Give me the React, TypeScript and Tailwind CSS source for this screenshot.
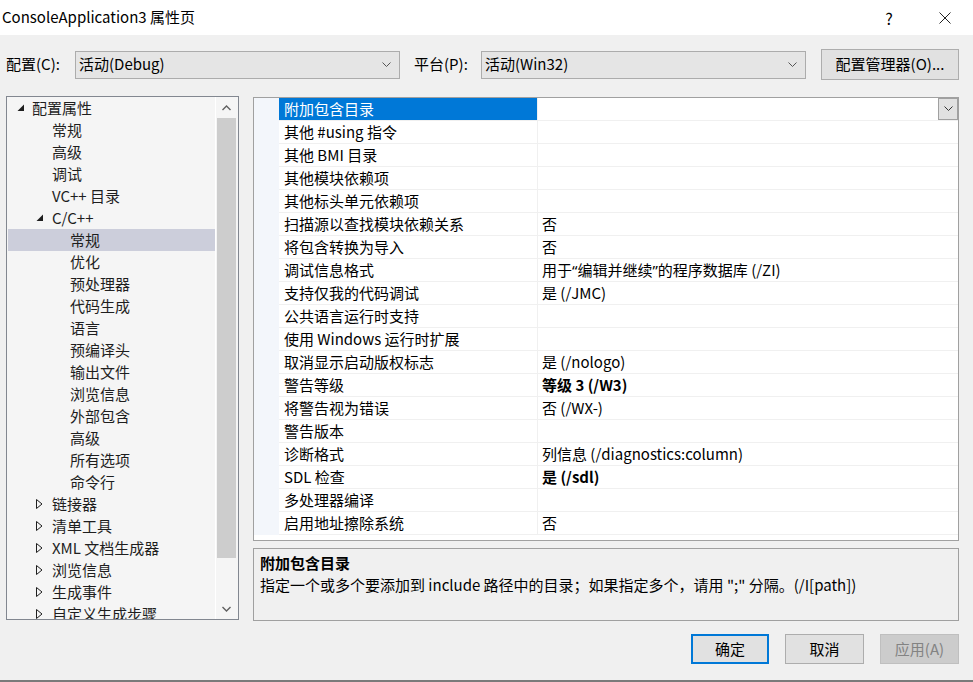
import React from "react";

type TreeItem = {
  label: string;
  level: 0 | 1 | 2;
  arrow?: "open" | "closed";
  selected?: boolean;
};

const TREE: TreeItem[] = [
  { label: "配置属性", level: 0, arrow: "open" },
  { label: "常规", level: 1 },
  { label: "高级", level: 1 },
  { label: "调试", level: 1 },
  { label: "VC++ 目录", level: 1 },
  { label: "C/C++", level: 1, arrow: "open" },
  { label: "常规", level: 2, selected: true },
  { label: "优化", level: 2 },
  { label: "预处理器", level: 2 },
  { label: "代码生成", level: 2 },
  { label: "语言", level: 2 },
  { label: "预编译头", level: 2 },
  { label: "输出文件", level: 2 },
  { label: "浏览信息", level: 2 },
  { label: "外部包含", level: 2 },
  { label: "高级", level: 2 },
  { label: "所有选项", level: 2 },
  { label: "命令行", level: 2 },
  { label: "链接器", level: 1, arrow: "closed" },
  { label: "清单工具", level: 1, arrow: "closed" },
  { label: "XML 文档生成器", level: 1, arrow: "closed" },
  { label: "浏览信息", level: 1, arrow: "closed" },
  { label: "生成事件", level: 1, arrow: "closed" },
  { label: "自定义生成步骤", level: 1, arrow: "closed" },
];

const INDENT = ["pl-[9px]", "pl-[28px]", "pl-[46px]"];

type Prop = { name: string; value?: React.ReactNode; bold?: boolean };

// curly quotes are narrow in the original font, so take them from a latin face
const Q = ({ c }: { c: string }) => <span className="font-['Noto_Sans',sans-serif]">{c}</span>;

const PROPS: Prop[] = [
  { name: "附加包含目录" },
  { name: "其他 #using 指令" },
  { name: "其他 BMI 目录" },
  { name: "其他模块依赖项" },
  { name: "其他标头单元依赖项" },
  { name: "扫描源以查找模块依赖关系", value: "否" },
  { name: "将包含转换为导入", value: "否" },
  {
    name: "调试信息格式",
    value: (
      <>
        用于<Q c="“" />编辑并继续<Q c="”" />的程序数据库 (/ZI)
      </>
    ),
  },
  { name: "支持仅我的代码调试", value: "是 (/JMC)" },
  { name: "公共语言运行时支持" },
  { name: "使用 Windows 运行时扩展" },
  { name: "取消显示启动版权标志", value: "是 (/nologo)" },
  { name: "警告等级", value: "等级 3 (/W3)", bold: true },
  { name: "将警告视为错误", value: "否 (/WX-)" },
  { name: "警告版本" },
  { name: "诊断格式", value: "列信息 (/diagnostics:column)" },
  { name: "SDL 检查", value: "是 (/sdl)", bold: true },
  { name: "多处理器编译" },
  { name: "启用地址擦除系统", value: "否" },
];

function Chevron({ up = false }: { up?: boolean }) {
  return (
    <svg width="9" height="6" viewBox="0 0 9 6" aria-hidden>
      <path
        d={up ? "M0.5 5 L4.5 1 L8.5 5" : "M0.5 1 L4.5 5 L8.5 1"}
        fill="none"
        stroke="#606060"
        strokeWidth="1.4"
      />
    </svg>
  );
}

function Combo({ text }: { text: string }) {
  return (
    <div className="w-[325px] h-[28px] bg-[#e5e5e5] border border-[#acacac] flex items-center pl-[3px] pr-[8px]">
      <span className="flex-1">{text}</span>
      <svg width="9" height="6" viewBox="0 0 9 6" aria-hidden>
        <path d="M0.5 0.5 L4.5 4.5 L8.5 0.5" fill="none" stroke="#555" strokeWidth="1" />
      </svg>
    </div>
  );
}

function TreeArrow({ kind }: { kind?: "open" | "closed" }) {
  if (kind === "open")
    return (
      <svg width="8" height="8" viewBox="0 0 8 8" aria-hidden>
        <path d="M7 0.5 L7 7 L0.5 7 Z" fill="#1e1e1e" />
      </svg>
    );
  if (kind === "closed")
    return (
      <svg width="7" height="10" viewBox="0 0 7 10" aria-hidden>
        <path d="M0.5 0.5 L6 5 L0.5 9.5 Z" fill="none" stroke="#1e1e1e" strokeWidth="1" />
      </svg>
    );
  return null;
}

export default function App() {
  return (
    <div className="w-[973px] h-[682px] bg-[#f0f0f0] flex flex-col text-[15px] text-black font-['Noto_Sans_CJK_SC',sans-serif] overflow-hidden">
      {/* title bar */}
      <div className="h-[35px] bg-white flex items-center pl-[2px] shrink-0">
        <span className="flex-1">ConsoleApplication3 属性页</span>
        <span className="w-[16px] text-center text-[16px] mr-[42px]">?</span>
        <svg width="12" height="12" viewBox="0 0 12 12" className="mr-[22px]" aria-hidden>
          <path d="M0.5 0.5 L11.5 11.5 M11.5 0.5 L0.5 11.5" stroke="#222" strokeWidth="1" />
        </svg>
      </div>

      {/* configuration row */}
      <div className="flex items-center mt-[14px] h-[31px] shrink-0">
        <span className="w-[75px] pl-[6px]">配置(C):</span>
        <Combo text="活动(Debug)" />
        <span className="w-[67px] ml-[14px]">平台(P):</span>
        <Combo text="活动(Win32)" />
        <button className="ml-[15px] w-[138px] h-[31px] bg-[#e1e1e1] border border-[#adadad]">
          配置管理器(O)...
        </button>
      </div>

      {/* main area */}
      <div className="flex mt-[16px] pl-[6px] shrink-0">
        {/* tree */}
        <div className="w-[233px] h-[524px] border border-[#828790] bg-[#f5f5f5] flex overflow-hidden">
          <div className="w-[209px] border-r border-white flex flex-col">
            {TREE.map((t, i) => (
              <div
                key={i}
                className={`h-[22px] shrink-0 flex items-center ml-[1px] ${INDENT[t.level]} ${
                  t.selected ? "bg-[#cccedb]" : ""
                }`}
              >
                <span className={`${t.level === 0 ? "w-[15px]" : "w-[16px]"} flex items-center`}>
                  <TreeArrow kind={t.arrow} />
                </span>
                <span className="text-[#1e1e1e] whitespace-nowrap">{t.label}</span>
              </div>
            ))}
          </div>
          <div className="w-[22px] flex flex-col">
            <div className="h-[21px] flex items-center justify-center pr-[2px]">
              <Chevron up />
            </div>
            <div className="h-[440px] w-[19px] ml-[1px] bg-[#cdcdcd]" />
            <div className="flex-1" />
            <div className="h-[21px] flex items-center justify-center pr-[2px]">
              <Chevron />
            </div>
          </div>
        </div>

        {/* right column */}
        <div className="ml-[14px] w-[706px] flex flex-col">
          <div className="mt-[1px] h-[444px] border border-[#a0a0a0] bg-white flex flex-col">
            {PROPS.map((p, i) => (
              <div key={i} className="h-[23px] flex shrink-0">
                <div className="w-[25px] bg-[#f3f6fb]" />
                <div
                  className={`w-[259px] flex items-center pl-[5px] border-r border-b border-[#f0f0f0] whitespace-nowrap ${
                    i === 0 ? "bg-[#0078d7] text-white" : ""
                  }`}
                >
                  {p.name}
                </div>
                <div
                  className={`flex-1 flex items-center pl-[4px] border-b border-[#f0f0f0] whitespace-nowrap ${
                    p.bold ? "font-bold" : ""
                  }`}
                >
                  <span className="flex-1">{p.value ?? ""}</span>
                  {i === 0 && (
                    <div className="w-[20px] h-[22px] bg-[#e1e1e1] border border-[#a0a0a0] flex items-center justify-center">
                      <svg width="9" height="6" viewBox="0 0 9 6" aria-hidden>
                        <path d="M0.5 0.5 L4.5 4.5 L8.5 0.5" fill="none" stroke="#333" strokeWidth="1" />
                      </svg>
                    </div>
                  )}
                </div>
              </div>
            ))}
          </div>

          <div className="mt-[7px] h-[73px] border border-[#a0a0a0] bg-[#f0f0f0] pl-[6px] pt-[3px]">
            <div className="h-[22px] flex items-center font-bold">附加包含目录</div>
            <div className="h-[22px] flex items-center whitespace-nowrap">
              指定一个或多个要添加到 include 路径中的目录；如果指定多个，请用 ";" 分隔。(/I[path])
            </div>
          </div>
        </div>
      </div>

      {/* buttons */}
      <div className="flex justify-end gap-[16px] pr-[14px] mt-[13px] shrink-0">
        <button className="w-[78px] h-[30px] bg-[#e1e1e1] border-2 border-[#0078d7]">确定</button>
        <button className="w-[79px] h-[30px] bg-[#e1e1e1] border border-[#adadad]">取消</button>
        <button className="w-[79px] h-[30px] bg-[#cccccc] border border-[#bfbfbf] text-[#838383]">
          应用(A)
        </button>
      </div>

      <div className="flex-1" />
      <div className="h-[2px] bg-[#7a7a7a] shrink-0" />
    </div>
  );
}
